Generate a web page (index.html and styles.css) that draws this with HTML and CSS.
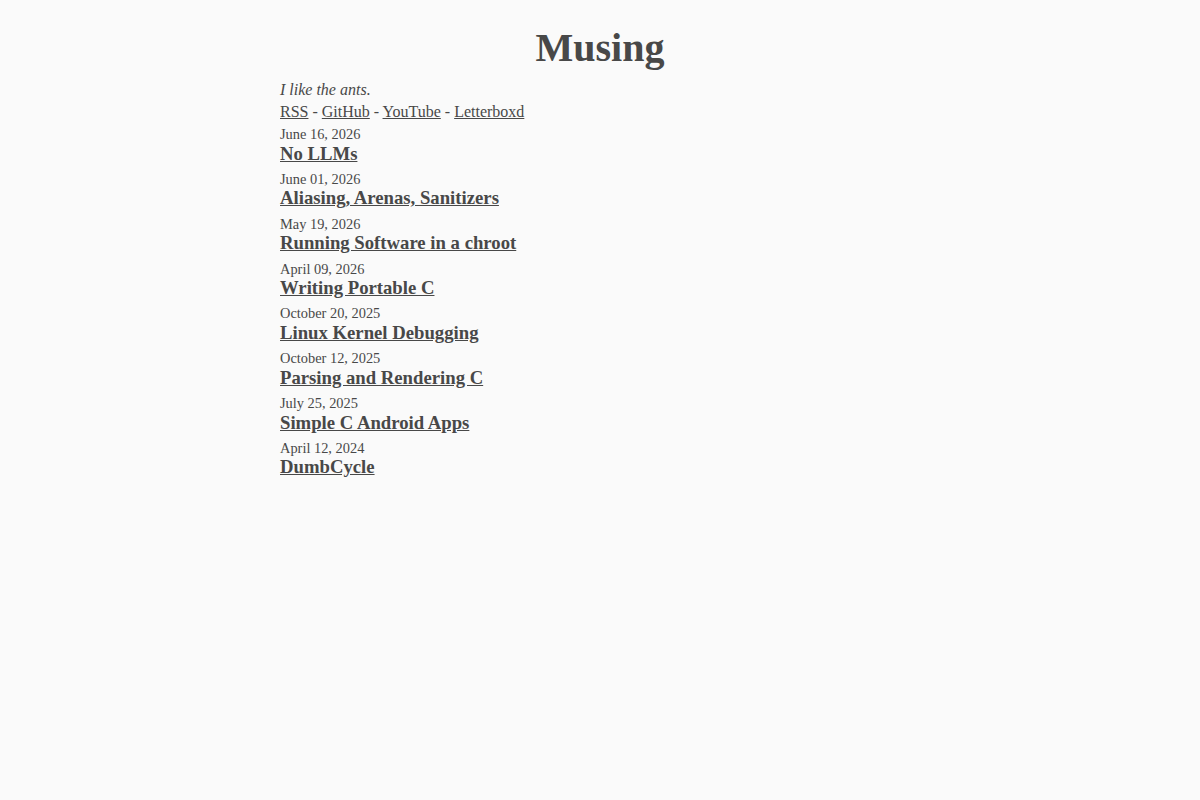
FILE: index.html
```html
<!DOCTYPE html>
<html lang="en">
<head>
<meta charset="utf-8">
<title>Musing</title>
<link rel="stylesheet" href="styles.css">
</head>
<body>
<main class="page">
  <h1 class="site-title">Musing</h1>
  <p class="tagline">I like the ants.</p>
  <nav class="links"><a href="#">RSS</a> - <a href="#">GitHub</a> - <a href="#">YouTube</a> - <a href="#">Letterboxd</a></nav>
  <ul class="posts">
    <li class="post"><div class="date">June 16, 2026</div><a class="post-title" href="#">No LLMs</a></li>
    <li class="post"><div class="date">June 01, 2026</div><a class="post-title" href="#">Aliasing, Arenas, Sanitizers</a></li>
    <li class="post"><div class="date">May 19, 2026</div><a class="post-title" href="#">Running Software in a chroot</a></li>
    <li class="post"><div class="date">April 09, 2026</div><a class="post-title" href="#">Writing Portable C</a></li>
    <li class="post"><div class="date">October 20, 2025</div><a class="post-title" href="#">Linux Kernel Debugging</a></li>
    <li class="post"><div class="date">October 12, 2025</div><a class="post-title" href="#">Parsing and Rendering C</a></li>
    <li class="post"><div class="date">July 25, 2025</div><a class="post-title" href="#">Simple C Android Apps</a></li>
    <li class="post"><div class="date">April 12, 2024</div><a class="post-title" href="#">DumbCycle</a></li>
  </ul>
</main>
</body>
</html>
```
FILE: styles.css
```css
html, body {
  margin: 0;
  padding: 0;
  background: #fafafa;
}
body {
  color: #484848;
  font-family: "Liberation Serif", "Times New Roman", serif;
}
a {
  color: #484848;
}
.page {
  max-width: 640px;
  margin: 0 auto;
  padding-top: 25px;
}
.site-title {
  margin: 0 0 8px;
  font-size: 40px;
  line-height: 46px;
  text-align: center;
  font-weight: bold;
}
.tagline {
  margin: 0;
  font-size: 16px;
  line-height: 22px;
  font-style: italic;
}
.links {
  font-size: 16px;
  line-height: 22px;
}
.posts {
  list-style: none;
  margin: 3px 0 0;
  padding: 0;
}
.post {
  display: flex;
  flex-direction: column;
  align-items: flex-start;
  margin-bottom: 6.85px;
}
.date {
  font-size: 14.4px;
  line-height: 16.5px;
}
.post-title {
  font-size: 18.72px;
  line-height: 21.5px;
  font-weight: bold;
}
```
